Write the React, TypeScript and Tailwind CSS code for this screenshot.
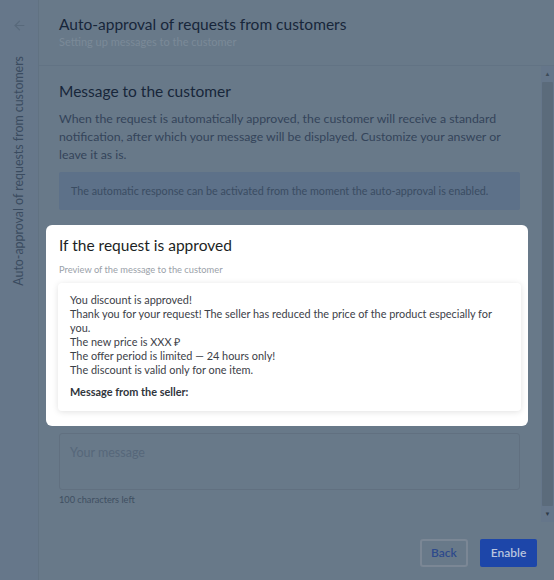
import { ArrowLeft } from 'lucide-react'

const previewLines = [
  'You discount is approved!',
  'Thank you for your request! The seller has reduced the price of the product especially for you.',
  'The new price is XXX ₽',
  'The offer period is limited — 24 hours only!',
  'The discount is valid only for one item.',
]

export default function App() {
  return (
    <div className="w-[554px] h-[580px] flex overflow-hidden bg-[#687989] font-['Lato',sans-serif]">
      {/* side rail */}
      <aside className="w-[39px] shrink-0 flex flex-col items-center border-r border-[#617282] bg-[#66778a]">
        <div className="h-[50px] flex items-center justify-center text-[#58697b]">
          <ArrowLeft className="w-[15px] h-[15px]" strokeWidth={1.75} />
        </div>
        <div className="mt-[4px] h-[232px] w-full flex justify-center items-end">
          <span className="[writing-mode:vertical-rl] rotate-180 whitespace-nowrap text-[12.4px] leading-none text-[#3a4b5f]">
            Auto-approval of requests from customers
          </span>
        </div>
      </aside>

      <div className="flex-1 flex flex-col min-w-0">
        {/* header */}
        <header className="h-[66px] shrink-0 border-b border-[#627384] pl-[20px] pt-[13px]">
          <h1 className="text-[15.5px] leading-[22px] text-[#17263a]">
            Auto-approval of requests from customers
          </h1>
          <p className="text-[11px] leading-[14px] text-[#7b8a98]">Setting up messages to the customer</p>
        </header>

        {/* scrolling body */}
        <div className="flex-1 flex min-h-0">
          <div className="flex-1 min-w-0 pl-[20px] pr-[21px] pt-[14px]">
            <h2 className="text-[15.5px] leading-[22px] text-[#17263a]">Message to the customer</h2>
            <p className="mt-[8px] text-[12.3px] leading-[18px] text-[#34445a]">
              When the request is automatically approved, the customer will receive a standard notification, after
              which your message will be displayed. Customize your answer or leave it as is.
            </p>
            <div className="mt-[8px] h-[38px] flex items-center px-[12px] bg-[#5d7189] rounded-[2px]">
              <span className="text-[10.75px] text-[#3a4c62]">
                The automatic response can be activated from the moment the auto-approval is enabled.
              </span>
            </div>

            {/* highlighted card */}
            <div className="mt-[15px] -ml-[13px] -mr-[8px] pl-[13px] pr-[7px] pt-[9px] pb-[15px] bg-white rounded-[6px]">
              <h3 className="text-[15.5px] leading-[22px] text-[#1c1f24]">If the request is approved</h3>
              <p className="mt-[8px] text-[9.3px] leading-[12px] text-[#9aa1a9]">Preview of the message to the customer</p>
              <div className="mt-[7px] -ml-[1px] pl-[12px] pr-[12px] pt-[10px] pb-[12px] rounded-[4px] bg-white shadow-[0_1px_6px_rgba(0,0,0,0.12)]">
                {previewLines.map((l) => (
                  <p key={l} className="text-[10.9px] leading-[14px] text-[#3c4148]">
                    {l}
                  </p>
                ))}
                <p className="mt-[8px] text-[10.9px] leading-[14px] font-bold text-[#30353c]">
                  Message from the seller:
                </p>
              </div>
            </div>

            <div className="mt-[7px] h-[57px] border border-[#617080] rounded-[3px] px-[10px] pt-[5px]">
              <span className="text-[12.5px] leading-[18px] text-[#56677a]">Your message</span>
            </div>
            <p className="mt-[4px] text-[9.2px] leading-[12px] text-[#3f4f61]">100 characters left</p>
          </div>

          {/* scrollbar */}
          <div className="w-[13px] shrink-0 flex flex-col items-center bg-[#65768a]">
            <span className="mt-[4px] text-[6px] leading-[8px] text-[#3d4b58]">▲</span>
            <div className="mt-[4px] w-[11px] flex-1 bg-[#5b6b7b] rounded-[1px]" />
            <span className="mb-[4px] mt-[4px] text-[6px] leading-[8px] text-[#2f3b47]">▼</span>
          </div>
        </div>

        {/* footer */}
        <footer className="h-[58px] shrink-0 flex items-center justify-end gap-[12px] pr-[17px] pt-[4px]">
          <button className="h-[28px] w-[48px] border-2 border-[#7b8795] rounded-[3px] text-[12px] font-semibold text-[#2d4a8c]">
            Back
          </button>
          <button className="h-[28px] w-[57px] bg-[#1d46a9] rounded-[2px] text-[12px] font-semibold text-[#b8c4de]">
            Enable
          </button>
        </footer>
      </div>
    </div>
  )
}
